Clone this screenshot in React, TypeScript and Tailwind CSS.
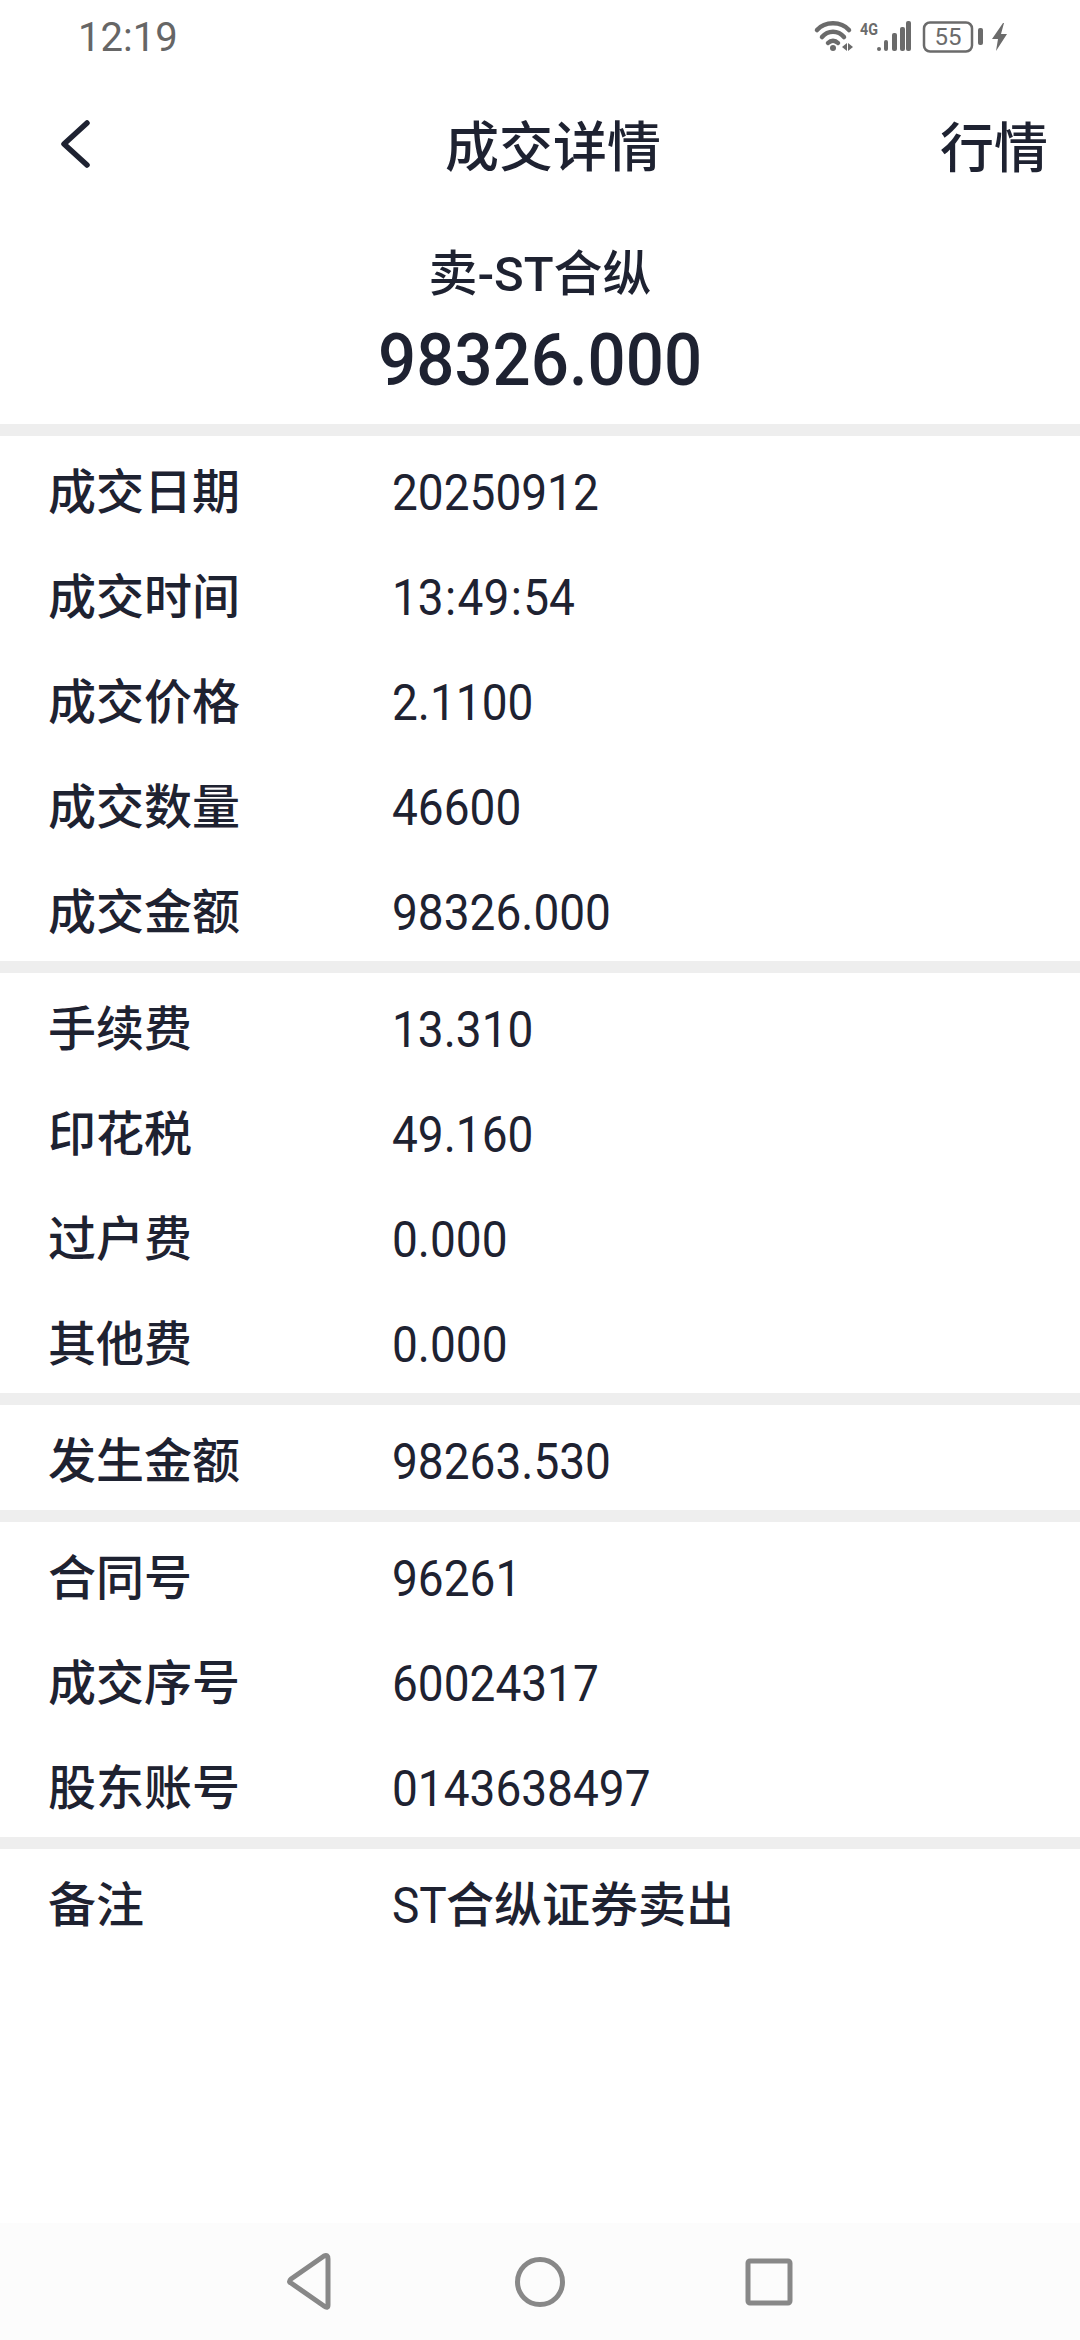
const cjk = "font-['Roboto','Noto_Sans_CJK_SC',sans-serif]";

type Row = [string, string];
const sections: Row[][] = [
  [
    ["成交日期", "20250912"],
    ["成交时间", "13:49:54"],
    ["成交价格", "2.1100"],
    ["成交数量", "46600"],
    ["成交金额", "98326.000"],
  ],
  [
    ["手续费", "13.310"],
    ["印花税", "49.160"],
    ["过户费", "0.000"],
    ["其他费", "0.000"],
  ],
  [["发生金额", "98263.530"]],
  [
    ["合同号", "96261"],
    ["成交序号", "60024317"],
    ["股东账号", "0143638497"],
  ],
  [["备注", "ST合纵证券卖出"]],
];

function Value({ v }: { v: string }) {
  if (v.startsWith("ST")) {
    return (
      <span className="text-[48px] flex items-center">
        <span className="inline-block w-[54px] origin-left scale-x-[0.92] text-[50px] font-[450]">ST</span>
        {v.slice(2)}
      </span>
    );
  }
  const parts = v.split(":");
  return (
    <span className="inline-block origin-left scale-x-[0.92] text-[50px] font-[450]">
      {parts.map((p, i) => (
        <span key={i}>
          {i > 0 && <span className="mx-[1.5px]">:</span>}
          {p}
        </span>
      ))}
    </span>
  );
}

function StatusIcons() {
  return (
    <svg width="210" height="40" viewBox="0 0 210 40" className="block" fill="none">
      <g stroke="#6b6b6b" strokeWidth="4.5" strokeLinecap="round" fill="none">
        <path d="M7 12 C15 3 31 3 39 12" />
        <path d="M12 19 C18 12 28 12 34 19" />
        <path d="M18 25 C21 22 25 22 28 25" />
      </g>
      <circle cx="23" cy="30" r="3" fill="#6b6b6b" />
      <path d="M32 29 L37 25 V33 Z M38 25 L43 29 L38 33 Z" fill="#6b6b6b" />
      <text x="50" y="17" fontSize="16" fontWeight="700" fill="#6b6b6b" fontFamily="Roboto" textLength="18" lengthAdjust="spacingAndGlyphs">4G</text>
      <g fill="#6b6b6b">
        <rect x="67" y="29" width="4" height="4" rx="2" />
        <rect x="74" y="22" width="4" height="11" rx="2" />
        <rect x="82" y="15" width="5" height="18" rx="2" />
        <rect x="90" y="9" width="5" height="24" rx="2" />
        <rect x="96" y="3" width="5" height="30" rx="2" />
      </g>
      <rect x="114" y="4.5" width="48" height="29" rx="6" stroke="#6b6b6b" strokeWidth="2.5" />
      <text x="138" y="27" fontSize="24" fill="#6b6b6b" fontFamily="Roboto" textAnchor="middle">55</text>
      <rect x="168" y="10" width="5" height="17" rx="2" fill="#6b6b6b" />
      <path d="M193 5 L182 21 H188 L186 33 L197 16 H191 L194 5 Z" fill="#6b6b6b" />
    </svg>
  );
}

export default function App() {
  return (
    <div className={`w-[1080px] h-[2340px] bg-white flex flex-col overflow-hidden text-[#1e2231] ${cjk}`}>
      <div className="h-[76px] flex items-center justify-between pl-[78px] pr-[60px] shrink-0">
        <span className="text-[40px] leading-none text-[#666666]">12:19</span>
        <StatusIcons />
      </div>
      <div className="h-[144px] flex items-center justify-between pl-[60px] pr-[32px] relative shrink-0">
        <svg width="32" height="48" viewBox="0 0 32 48" fill="none" className="-mt-[8px]">
          <path d="M27 3 L4 24 L27 45" stroke="#1e2231" strokeWidth="5.5" strokeLinecap="round" strokeLinejoin="round" />
        </svg>
        <span className="absolute left-[445px] top-[46px] text-[54px] font-medium leading-none">成交详情</span>
        <span className="text-[54px] font-medium leading-none mt-[4px]">行情</span>
      </div>
      <div className="h-[204px] flex flex-col items-center shrink-0">
        <div className="text-[49px] font-medium leading-none mt-[19px] h-[70px] flex items-center">卖-ST合纵</div>
        <div className="text-[73px] font-medium leading-none scale-x-[0.92] mt-[15px]">98326.000</div>
      </div>
      {sections.map((rows, i) => (
        <div key={i} className="border-t-[12px] border-[#eeeeee]">
          {rows.map(([k, v]) => (
            <div key={k} className="h-[105px] flex items-center pl-[48px] text-[48px] font-medium leading-none pt-[8px]">
              <span className="w-[344px] shrink-0">{k}</span>
              <Value v={v} />
            </div>
          ))}
        </div>
      ))}
      <div className="flex-1" />
      <div className="h-[117px] bg-[#fcfcfc] relative shrink-0 flex items-center justify-center">
        <svg width="1080" height="117" viewBox="0 0 1080 117" fill="none" stroke="#888888" strokeWidth="5">
          <path d="M328 36 V82 Q328 86 324 83 L291 60 Q288 59 291 56 L324 33 Q328 31 328 36 Z" strokeLinejoin="round" />
          <circle cx="540" cy="59" r="22.5" />
          <rect x="748" y="38" width="42" height="42" rx="2" />
        </svg>
      </div>
    </div>
  );
}
